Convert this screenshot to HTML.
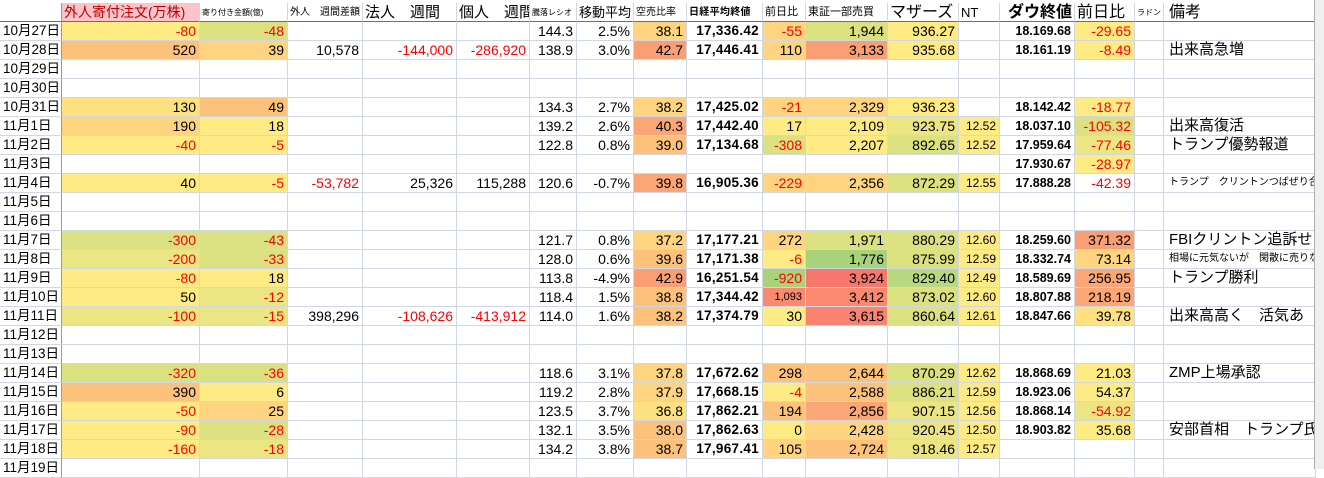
<!DOCTYPE html>
<html><head><meta charset="utf-8"><style>
body{margin:0;width:1324px;height:469px;overflow:hidden;background:#fff;font-family:"Liberation Sans","Noto Sans CJK JP",sans-serif;position:relative}
.row{position:absolute;left:0;height:19px;display:flex;width:1324px}
.row>i{font-style:normal;box-sizing:border-box;height:19px;border-right:1px solid #d0d7e5;border-bottom:1px solid #d0d7e5;font-size:14px;line-height:18px;text-align:right;padding-right:3px;white-space:nowrap;overflow:hidden;color:#000}
.row>i:nth-child(1){width:62px;text-align:left;padding-left:3px;font-size:13.5px;border-right:1px solid #9a9a9a}
.row>i:nth-child(2){width:138px}
.row>i:nth-child(3){width:88px}
.row>i:nth-child(4){width:75px}
.row>i:nth-child(5){width:94px}
.row>i:nth-child(6){width:73px}
.row>i:nth-child(7){width:47px}
.row>i:nth-child(8){width:57px}
.row>i:nth-child(9){width:53px}
.row>i:nth-child(10){width:76px;font-weight:bold;font-size:13.5px;letter-spacing:0.3px}
.row>i:nth-child(11){width:43px}
.row>i:nth-child(12){width:82px}
.row>i:nth-child(13){width:71px}
.row>i:nth-child(14){width:41px;font-size:12px}
.row>i:nth-child(15){width:75px;font-weight:bold;font-size:12.5px}
.row>i:nth-child(16){width:60px}
.row>i:nth-child(17){width:29px}
.row>i:nth-child(18){width:152px;text-align:left;padding-left:5px;font-size:15px}
.hd>i{font-size:10px;text-align:left;padding-left:2px;border-bottom:1px solid #6e6e6e;line-height:19px}
.hd>i.b{font-size:16px}
.r{color:#f00!important}
.s{font-size:10px!important}
.Y{background:#ffeb84}.y{background:#fee282}.o{background:#fed480}.O{background:#fcc27c}.P{background:#fba676}.Q{background:#fa9e73}.R{background:#f8776d}.R2{background:#f98a70}.g{background:#ebe683}.G{background:#dbe081}.H{background:#a9d27d}
.sb{position:absolute;left:1314px;top:0;width:10px;height:469px;background:#f0f0f0;border-left:1px solid #b0b0b0}
</style></head><body>
<div class="row" style="top:0;height:3px"></div>
<div class="row hd" style="top:3px">
<i></i><i class="b" style="background:#fbc4ca;color:#c00000;font-size:14px">外人寄付注文(万株)</i><i style="font-size:8px">寄り付き金額(億)</i><i>外人　週間差額</i><i class="b" style="font-size:15px">法人　週間</i><i class="b" style="font-size:15px">個人　週間</i><i style="font-size:8px">騰落レシオ</i><i style="font-size:13px">移動平均</i><i>空売比率</i><i style="font-weight:bold;font-size:10px">日経平均終値</i><i style="font-size:11px">前日比</i><i style="font-size:11px">東証一部売買</i><i class="b">マザーズ</i><i style="font-size:13px">NT</i><i class="b" style="font-weight:bold;padding-left:8px">ダウ終値</i><i class="b">前日比</i><i style="font-size:8px">ラドン</i><i class="b">備考</i>
</div>

<div class="row" style="top:22px"><i>10月27日</i><i class="Y r">-80</i><i class="G r">-48</i><i></i><i></i><i></i><i>144.3</i><i>2.5%</i><i class="o">38.1</i><i>17,336.42</i><i class="o r">-55</i><i class="G">1,944</i><i class="Y">936.27</i><i></i><i>18.169.68</i><i class="Y r">-29.65</i><i></i><i></i></div>
<div class="row" style="top:41px"><i>10月28日</i><i class="O">520</i><i class="o">39</i><i>10,578</i><i class="r">-144,000</i><i class="r">-286,920</i><i>138.9</i><i>3.0%</i><i class="Q">42.7</i><i>17,446.41</i><i class="o">110</i><i class="Q">3,133</i><i class="Y">935.68</i><i></i><i>18.161.19</i><i class="Y r">-8.49</i><i></i><i>出来高急増</i></div>
<div class="row" style="top:60px"><i>10月29日</i><i></i><i></i><i></i><i></i><i></i><i></i><i></i><i></i><i></i><i></i><i></i><i></i><i></i><i></i><i></i><i></i><i></i></div>
<div class="row" style="top:79px"><i>10月30日</i><i></i><i></i><i></i><i></i><i></i><i></i><i></i><i></i><i></i><i></i><i></i><i></i><i></i><i></i><i></i><i></i><i></i></div>
<div class="row" style="top:98px"><i>10月31日</i><i class="y">130</i><i class="O">49</i><i></i><i></i><i></i><i>134.3</i><i>2.7%</i><i class="o">38.2</i><i>17,425.02</i><i class="o r">-21</i><i class="o">2,329</i><i class="Y">936.23</i><i></i><i>18.142.42</i><i class="Y r">-18.77</i><i></i><i></i></div>
<div class="row" style="top:117px"><i>11月1日</i><i class="o">190</i><i class="Y">18</i><i></i><i></i><i></i><i>139.2</i><i>2.6%</i><i class="P">40.3</i><i>17,442.40</i><i class="Y">17</i><i class="Y">2,109</i><i class="g">923.75</i><i class="Y">12.52</i><i>18.037.10</i><i class="G r">-105.32</i><i></i><i>出来高復活</i></div>
<div class="row" style="top:136px"><i>11月2日</i><i class="Y r">-40</i><i class="Y r">-5</i><i></i><i></i><i></i><i>122.8</i><i>0.8%</i><i class="O">39.0</i><i>17,134.68</i><i class="G r">-308</i><i class="Y">2,207</i><i class="G">892.65</i><i class="Y">12.52</i><i>17.959.64</i><i class="g r">-77.46</i><i></i><i>トランプ優勢報道</i></div>
<div class="row" style="top:155px"><i>11月3日</i><i></i><i></i><i></i><i></i><i></i><i></i><i></i><i></i><i></i><i></i><i></i><i></i><i></i><i>17.930.67</i><i class="Y r">-28.97</i><i></i><i></i></div>
<div class="row" style="top:174px"><i>11月4日</i><i class="Y">40</i><i class="Y r">-5</i><i class="r">-53,782</i><i>25,326</i><i>115,288</i><i>120.6</i><i>-0.7%</i><i class="P">39.8</i><i>16,905.36</i><i class="o r">-229</i><i class="o">2,356</i><i class="G">872.29</i><i class="Y">12.55</i><i>17.888.28</i><i class="r">-42.39</i><i></i><i class="s">トランプ　クリントンつばぜり合</i></div>
<div class="row" style="top:193px"><i>11月5日</i><i></i><i></i><i></i><i></i><i></i><i></i><i></i><i></i><i></i><i></i><i></i><i></i><i></i><i></i><i></i><i></i><i></i></div>
<div class="row" style="top:212px"><i>11月6日</i><i></i><i></i><i></i><i></i><i></i><i></i><i></i><i></i><i></i><i></i><i></i><i></i><i></i><i></i><i></i><i></i><i></i></div>
<div class="row" style="top:231px"><i>11月7日</i><i class="G r">-300</i><i class="G r">-43</i><i></i><i></i><i></i><i>121.7</i><i>0.8%</i><i class="o">37.2</i><i>17,177.21</i><i class="o">272</i><i class="G">1,971</i><i class="G">880.29</i><i class="Y">12.60</i><i>18.259.60</i><i class="Q">371.32</i><i></i><i>FBIクリントン追訴せ</i></div>
<div class="row" style="top:250px"><i>11月8日</i><i class="g r">-200</i><i class="G r">-33</i><i></i><i></i><i></i><i>128.0</i><i>0.6%</i><i class="O">39.6</i><i>17,171.38</i><i class="Y r">-6</i><i class="H">1,776</i><i class="G">875.99</i><i class="Y">12.59</i><i>18.332.74</i><i class="o">73.14</i><i></i><i class="s">相場に元気ないが　閑散に売りな</i></div>
<div class="row" style="top:269px"><i>11月9日</i><i class="Y r">-80</i><i class="Y">18</i><i></i><i></i><i></i><i>113.8</i><i>-4.9%</i><i class="Q">42.9</i><i>16,251.54</i><i class="H r">-920</i><i class="R">3,924</i><i class="H" style="background:#b8d97f">829.40</i><i class="Y">12.49</i><i>18.589.69</i><i class="P">256.95</i><i></i><i>トランプ勝利</i></div>
<div class="row" style="top:288px"><i>11月10日</i><i class="Y">50</i><i class="g r">-12</i><i></i><i></i><i></i><i>118.4</i><i>1.5%</i><i class="O">38.8</i><i>17,344.42</i><i class="R2" style="font-size:11px">1,093</i><i class="R2">3,412</i><i class="G">873.02</i><i class="Y">12.60</i><i>18.807.88</i><i class="P">218.19</i><i></i><i></i></div>
<div class="row" style="top:307px"><i>11月11日</i><i class="g r">-100</i><i class="g r">-15</i><i>398,296</i><i class="r">-108,626</i><i class="r">-413,912</i><i>114.0</i><i>1.6%</i><i class="O">38.2</i><i>17,374.79</i><i class="Y">30</i><i class="R" style="background:#f98370">3,615</i><i class="G">860.64</i><i class="Y">12.61</i><i>18.847.66</i><i class="y">39.78</i><i></i><i>出来高高く　活気あ</i></div>
<div class="row" style="top:326px"><i>11月12日</i><i></i><i></i><i></i><i></i><i></i><i></i><i></i><i></i><i></i><i></i><i></i><i></i><i></i><i></i><i></i><i></i><i></i></div>
<div class="row" style="top:345px"><i>11月13日</i><i></i><i></i><i></i><i></i><i></i><i></i><i></i><i></i><i></i><i></i><i></i><i></i><i></i><i></i><i></i><i></i><i></i></div>
<div class="row" style="top:364px"><i>11月14日</i><i class="G r">-320</i><i class="G r">-36</i><i></i><i></i><i></i><i>118.6</i><i>3.1%</i><i class="o">37.8</i><i>17,672.62</i><i class="O">298</i><i class="O">2,644</i><i class="G">870.29</i><i class="Y">12.62</i><i>18.868.69</i><i class="Y">21.03</i><i></i><i>ZMP上場承認</i></div>
<div class="row" style="top:383px"><i>11月15日</i><i class="O">390</i><i class="Y">6</i><i></i><i></i><i></i><i>119.2</i><i>2.8%</i><i class="o">37.9</i><i>17,668.15</i><i class="Y r">-4</i><i class="O">2,588</i><i class="G">886.21</i><i class="Y">12.59</i><i>18.923.06</i><i class="Y">54.37</i><i></i><i></i></div>
<div class="row" style="top:402px"><i>11月16日</i><i class="Y r">-50</i><i class="o">25</i><i></i><i></i><i></i><i>123.5</i><i>3.7%</i><i class="y">36.8</i><i>17,862.21</i><i class="O">194</i><i class="P">2,856</i><i class="g">907.15</i><i class="Y">12.56</i><i>18.868.14</i><i class="g r">-54.92</i><i></i><i></i></div>
<div class="row" style="top:421px"><i>11月17日</i><i class="Y r">-90</i><i class="G r">-28</i><i></i><i></i><i></i><i>132.1</i><i>3.5%</i><i class="O">38.0</i><i>17,862.63</i><i class="Y">0</i><i class="o">2,428</i><i class="g">920.45</i><i class="Y">12.50</i><i>18.903.82</i><i class="Y">35.68</i><i></i><i>安部首相　トランプ氏</i></div>
<div class="row" style="top:440px"><i>11月18日</i><i class="Y r">-160</i><i class="g r">-18</i><i></i><i></i><i></i><i>134.2</i><i>3.8%</i><i class="O">38.7</i><i>17,967.41</i><i class="o">105</i><i class="O">2,724</i><i class="g">918.46</i><i class="Y">12.57</i><i></i><i></i><i></i><i></i></div>
<div class="row" style="top:459px"><i>11月19日</i><i></i><i></i><i></i><i></i><i></i><i></i><i></i><i></i><i></i><i></i><i></i><i></i><i></i><i></i><i></i><i></i><i></i></div>
<div class="sb"></div>
</body></html>
